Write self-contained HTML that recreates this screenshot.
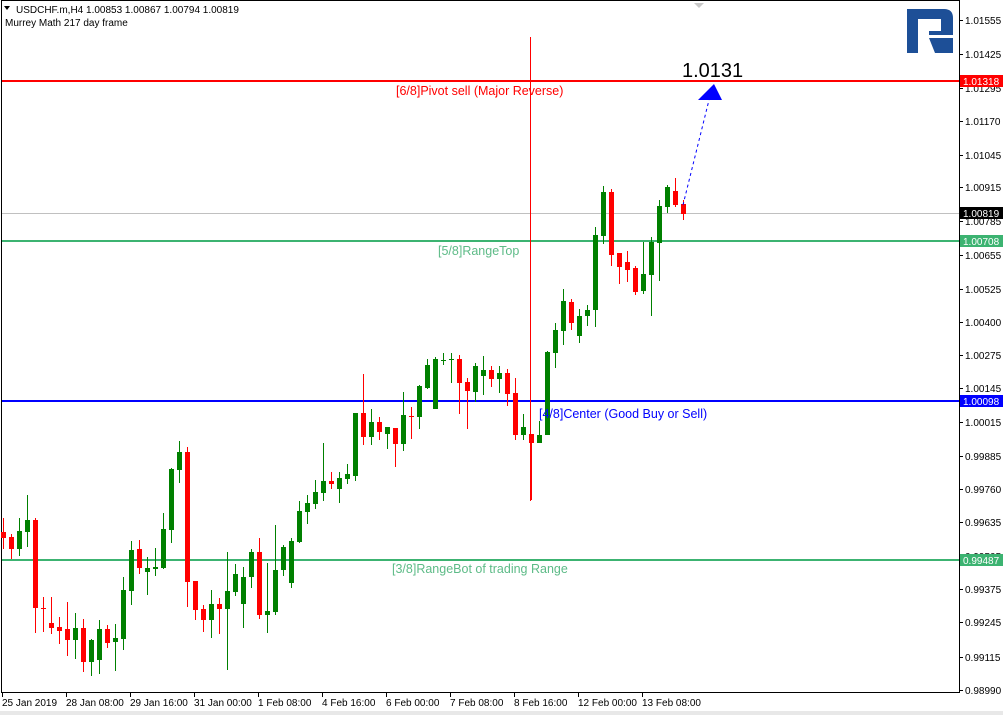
<!DOCTYPE html>
<html><head><meta charset="utf-8"><style>
html,body{margin:0;padding:0;background:#fff;width:1003px;height:715px;overflow:hidden;font-family:"Liberation Sans",sans-serif}
</style></head><body>
<svg width="1003" height="715" xmlns="http://www.w3.org/2000/svg" font-family="Liberation Sans, sans-serif">
<rect x="0" y="0" width="1003" height="715" fill="#fff"/>
<rect x="0" y="711" width="1003" height="4" fill="#e8e8e8"/>
<rect x="1.5" y="0.5" width="958" height="692" fill="none" stroke="#000" stroke-width="1"/>
<polygon points="694,3 704,3 699,8" fill="#c8c8c8"/>
<polygon points="4,6 10,6 7,10" fill="#000"/>
<text x="16" y="13" font-size="10" fill="#000">USDCHF.m,H4  1.00853 1.00867 1.00794 1.00819</text>
<text x="5" y="26" font-size="10" fill="#000">Murrey Math 217 day frame</text>
<!-- logo -->
<path d="M907,9 H944 Q953,9 953,18 V35 H929 V31 H941 V19 H918 V53 H907 Z" fill="#1d4f97"/>
<path d="M929,38 H953 V53 H935 Z" fill="#1d4f97"/>
<line x1="2" y1="213.5" x2="959" y2="213.5" stroke="#c0c0c0" stroke-width="1"/>
<line x1="2" y1="81" x2="959" y2="81" stroke="#ff0000" stroke-width="2"/>
<line x1="2" y1="241" x2="959" y2="241" stroke="#3cb371" stroke-width="2"/>
<line x1="2" y1="401" x2="959" y2="401" stroke="#0000ff" stroke-width="2"/>
<line x1="2" y1="560" x2="959" y2="560" stroke="#3cb371" stroke-width="2"/>
<line x1="530.5" y1="37" x2="530.5" y2="501" stroke="#ff0000" stroke-width="1"/>
<g id="c"></g>
<text x="396" y="95" font-size="12.5" fill="#ff0000">[6/8]Pivot sell (Major Reverse)</text>
<text x="438" y="255" font-size="12.5" fill="#5dbb87">[5/8]RangeTop</text>
<text x="539" y="418" font-size="12.5" fill="#0000ff">[4/8]Center (Good Buy or Sell)</text>
<text x="392" y="573" font-size="12.5" fill="#5dbb87">[3/8]RangeBot of trading Range</text>
<text x="682" y="77" font-size="20" fill="#000">1.0131</text>
<line x1="683" y1="205" x2="709" y2="100" stroke="#0000ff" stroke-width="1" stroke-dasharray="3,3"/>
<polygon points="698,100 722,100 714,84" fill="#0000ff"/>
<g font-size="10" fill="#000" id="ax"></g>
<rect x="960" y="75" width="43" height="12" fill="#ff0000"/><text x="963" y="85" font-size="10" fill="#fff">1.01318</text>
<rect x="960" y="207" width="43" height="12" fill="#000"/><text x="963" y="217" font-size="10" fill="#fff">1.00819</text>
<rect x="960" y="235" width="43" height="12" fill="#3cb371"/><text x="963" y="245" font-size="10" fill="#fff">1.00708</text>
<rect x="960" y="395" width="43" height="12" fill="#0000ff"/><text x="963" y="405" font-size="10" fill="#fff">1.00098</text>
<rect x="960" y="554" width="43" height="12" fill="#3cb371"/><text x="963" y="564" font-size="10" fill="#fff">0.99487</text>
<g font-size="10" fill="#000">
<text x="2" y="706">25 Jan 2019</text><text x="66" y="706">28 Jan 08:00</text><text x="130" y="706">29 Jan 16:00</text><text x="194" y="706">31 Jan 00:00</text><text x="258" y="706">1 Feb 08:00</text><text x="322" y="706">4 Feb 16:00</text><text x="386" y="706">6 Feb 00:00</text><text x="450" y="706">7 Feb 08:00</text><text x="514" y="706">8 Feb 16:00</text><text x="578" y="706">12 Feb 00:00</text><text x="642" y="706">13 Feb 08:00</text>
</g>
<g stroke="#000" stroke-width="1">
<line x1="2.5" y1="693" x2="2.5" y2="697"/><line x1="66.5" y1="693" x2="66.5" y2="697"/><line x1="130.5" y1="693" x2="130.5" y2="697"/><line x1="194.5" y1="693" x2="194.5" y2="697"/><line x1="258.5" y1="693" x2="258.5" y2="697"/><line x1="322.5" y1="693" x2="322.5" y2="697"/><line x1="386.5" y1="693" x2="386.5" y2="697"/><line x1="450.5" y1="693" x2="450.5" y2="697"/><line x1="514.5" y1="693" x2="514.5" y2="697"/><line x1="578.5" y1="693" x2="578.5" y2="697"/><line x1="642.5" y1="693" x2="642.5" y2="697"/>
</g>
</svg>
<script>
var d=[[0,532,538,518,549],[0,537,549,534,559],[1,531,549,518,556],[1,520,532,495,547],[0,520,608,518,633],[0,608,608,597,632],[0,623,628,597,634],[0,627,631,617,644],[0,629,640,602,656],[1,628,640,613,659],[0,628,662,619,672],[1,640,662,639,676],[1,629,660,620,674],[0,629,643,625,648],[1,638,642,624,671],[1,590,639,577,650],[1,550,591,541,605],[0,549,568,540,574],[1,568,572,557,595],[1,567,569,548,576],[1,529,568,513,569],[1,469,530,468,543],[1,452,470,441,483],[0,452,582,447,607],[0,581,610,581,620],[0,609,620,605,632],[1,604,620,590,638],[0,604,609,598,634],[1,591,609,552,670],[1,574,592,564,596],[1,577,604,567,628],[1,552,577,549,588],[0,552,615,538,619],[1,611,615,563,633],[1,570,612,525,615],[1,547,570,545,576],[1,541,583,538,588],[1,511,542,501,543],[1,503,512,495,524],[1,492,504,480,509],[1,481,493,443,501],[0,481,484,472,489],[1,478,489,472,503],[1,474,479,464,484],[1,413,476,413,481],[0,413,437,374,445],[1,422,437,409,445],[0,422,432,417,440],[1,427,434,427,449],[0,428,444,428,467],[1,415,444,392,451],[0,416,416,407,439],[1,386,417,385,429],[1,365,388,359,389],[1,359,409,357,409],[1,360,360,353,365],[1,359,359,353,383],[0,359,383,355,414],[0,382,391,378,429],[1,366,392,363,402],[1,370,376,356,395],[0,370,379,366,387],[1,373,379,366,393],[0,373,394,369,406],[0,393,435,378,440],[1,427,435,414,440],[0,434,443,434,500],[1,435,443,421,443],[1,352,435,351,435],[1,330,353,323,368],[1,301,331,289,345],[0,302,323,299,330],[1,316,336,309,343],[1,310,316,305,326],[1,235,310,227,327],[1,192,236,186,244],[0,192,255,189,266],[0,253,267,253,284],[0,262,270,251,282],[0,268,292,266,295],[1,274,291,242,294],[1,242,275,237,316],[1,206,243,200,281],[1,187,207,185,213],[0,191,205,178,207],[0,204,214,200,220]];
var s='';d.forEach(function(c,i){var x=3+8*i,col=c[0]?'#008000':'#ff0000';
s+='<rect x="'+x+'" y="'+c[3]+'" width="1" height="'+(c[4]-c[3])+'" fill="'+col+'"/>';
var h=Math.max(1,c[2]-c[1]);s+='<rect x="'+(x-2)+'" y="'+c[1]+'" width="5" height="'+h+'" fill="'+col+'"/>';});
document.getElementById('c').innerHTML=s;
var t=[["1.01555",20],["1.01425",54],["1.01295",88],["1.01170",121],["1.01045",155],["1.00915",187],["1.00785",221],["1.00655",255],["1.00525",289],["1.00400",322],["1.00275",355],["1.00145",388],["1.00015",422],["0.99885",456],["0.99760",489],["0.99635",522],["0.99505",556],["0.99375",589],["0.99245",622],["0.99115",657],["0.98990",690]];
var a='';t.forEach(function(v){a+='<line x1="960" y1="'+v[1]+'.5" x2="963" y2="'+v[1]+'.5" stroke="#000"/><text x="965" y="'+(v[1]+4)+'">'+v[0]+'</text>';});
document.getElementById('ax').innerHTML=a;
</script>
</body></html>
